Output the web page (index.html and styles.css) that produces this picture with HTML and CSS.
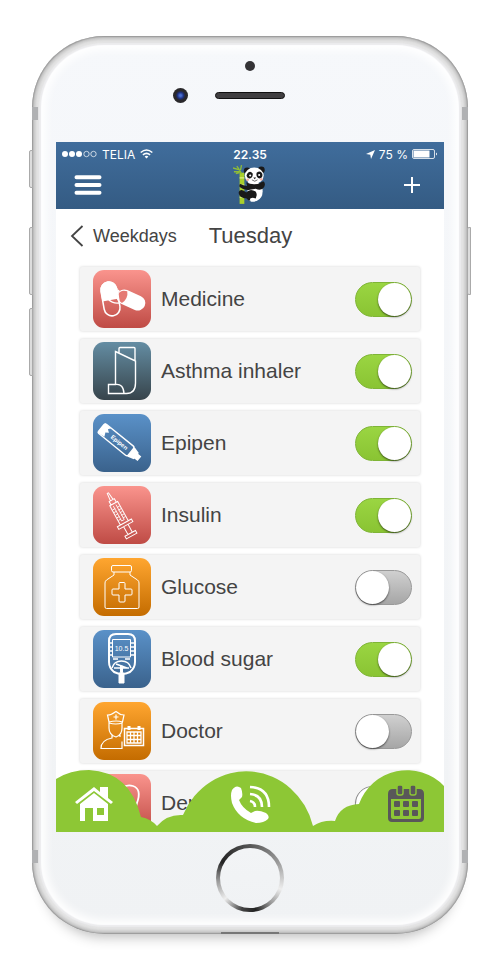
FILE: index.html
```html
<!DOCTYPE html>
<html lang="en">
<head>
    <meta charset="UTF-8">
    <meta name="viewport" content="width=device-width, initial-scale=1">
    <title>Tuesday</title>
    <link rel="stylesheet" href="styles.css">
</head>
<body>
    <div class="phone">
        <span class="side-button mute"></span>
        <span class="side-button volume-up"></span>
        <span class="side-button volume-down"></span>
        <span class="side-button power"></span>
        <span class="antenna antenna-top"></span>
        <span class="antenna antenna-bottom"></span>

        <div class="bezel-top">
            <span class="sensor"></span>
            <div class="speaker-row">
                <span class="camera"></span>
                <span class="speaker"></span>
            </div>
        </div>

        <div class="screen">
            <header class="header">
                <div class="status-bar">
                    <div class="carrier">
                        <svg width="35" height="8" viewBox="0 0 35 8" fill="#fff" stroke="#fff">
                            <g stroke="none"><circle cx="3" cy="4" r="3"/><circle cx="10" cy="4" r="3"/><circle cx="17" cy="4" r="3"/></g>
                            <g fill="none" stroke-width=".7"><circle cx="24.500" cy="4" r="2.700"/><circle cx="31.500" cy="4" r="2.700"/></g>
                        </svg>
                        <span>TELIA</span>
                        <svg width="13" height="10" viewBox="0 0 13 10" fill="none" stroke="#fff" stroke-width="1.600">
                            <path d="M.7 3.500q5.800-5 11.600 0M2.900 5.800q3.600-3 7.200 0"/><path d="M4.600 7.600q1.900-1.500 3.800 0L6.500 9.600z" fill="#fff" stroke="none"/>
                        </svg>
                    </div>
                    <strong class="time">22.35</strong>
                    <div class="battery">
                        <svg width="9" height="9" viewBox="0 0 9 9" fill="#fff"><path d="M9 0L5 9 4.300 4.700 0 4z"/></svg>
                        <span>75 %</span>
                        <svg width="26" height="10" viewBox="0 0 26 10" fill="none" stroke="#fff">
                            <rect x=".5" y=".5" width="22" height="9" rx="1.500" stroke-width=".8"/>
                            <path d="M1.500 1.500h16v7h-16z" fill="#fff" stroke="none"/><path d="M24 3.500q2 1.500 0 3z" fill="#fff" stroke="none"/>
                        </svg>
                    </div>
                </div>
                <div class="toolbar">
                    <button type="button" class="menu-button" aria-label="Menu">
                        <svg width="28" height="20" viewBox="0 0 28 20" stroke="#fff" stroke-width="4" stroke-linecap="round"><path d="M2.500 2.200h23M2.500 10h23M2.500 17.800h23"/></svg>
                    </button>
                    <svg class="logo" width="34" height="40" viewBox="0 0 36 42">
                        <path d="M7 8h5v33H7z" fill="#a9cf2c"/>
                        <path d="M7 13.500h5M7 21h5M7 34h5" stroke="#dff08a" stroke-width="1.200"/>
                        <path d="M9 9Q6 3 4 1M7 5L0 3M8 7L1 7M8 5L9 0M7 8L3 9" stroke="#8fbd36" stroke-width="1.400" fill="none"/>
                        <path d="M16 18q12-4 15 6 2 10-6 14-7 2-10-3z" fill="#fff"/>
                        <path d="M14 18q9 5 18-1 3 2 1 6-3 5-9 2l-6 1q-6 1-11-3-1-3 1-3 4 2 7 2z" fill="#191919"/>
                        <path d="M7 27q3-2 7 2 4-5 10-1 3 5-2 9-5 2-8-2-5 0-7-3-2-3 0-5z" fill="#191919"/>
                        <circle cx="15" cy="6" r="3.600" fill="#191919"/><circle cx="30" cy="5" r="3.600" fill="#191919"/>
                        <ellipse cx="22.500" cy="11" rx="10" ry="8.500" fill="#fff"/>
                        <path d="M15 9q3-4 6 0 0 5-4 5-4-1-2-5zM25 8q4-3 6 1 1 5-3 5-4-1-3-6z" fill="#191919"/>
                        <circle cx="18.200" cy="11" r="1.100" fill="#fff"/><circle cx="27.700" cy="10.500" r="1.100" fill="#fff"/>
                        <path d="M21.500 13h3l-1.500 2z" fill="#191919"/><path d="M20 15.500q3 3 6 0" fill="none" stroke="#444" stroke-width=".8"/>
                        <circle cx="15.500" cy="15.500" r="1.500" fill="#f3b4a8"/><circle cx="30" cy="15" r="1.500" fill="#f3b4a8"/>
                        <ellipse cx="21" cy="36.500" rx="3" ry="2" fill="#fff"/>
                    </svg>
                    <button type="button" class="add-button" aria-label="Add">
                        <svg width="16" height="16" viewBox="0 0 16 16" stroke="#fff" stroke-width="2"><path d="M0 8h16M8 0v16"/></svg>
                    </button>
                </div>
            </header>

            <div class="title-bar">
                <a href="#" class="back">
                    <svg width="14" height="22" viewBox="0 0 14 22" fill="none" stroke="#444" stroke-width="1.800"><path d="M12.500 1L2 11l10.500 10"/></svg>
                    Weekdays
                </a>
                <h1>Tuesday</h1>
            </div>

            <main class="list">
                <label class="row">
                    <span class="icon red">
                        <svg viewBox="0 0 58 58">
                            <g transform="translate(38 30) rotate(24)"><rect x="-15" y="-7.500" width="30" height="15" rx="7.500" fill="#fff"/><path d="M-7-6.500q4 6 0 13-7-1-7-6.500t7-6.500z" fill="#e57973"/></g>
                            <g transform="translate(17.500 29) rotate(-10)"><rect x="-8" y="-17" width="16" height="34" rx="8" fill="none" stroke="#fff" stroke-width="1.500"/><path d="M-8.500 1V-9.500a8.500 8.500 0 0 1 17 0V1z" fill="#fff"/></g>
                            <path d="M15 29q5 5 11 4M26 20q-3 4-1 9" fill="none" stroke="#fff" stroke-width="1.300"/>
                        </svg>
                    </span>
                    <span class="name">Medicine</span>
                    <input type="checkbox" class="switch" checked>
                </label>
                <label class="row">
                    <span class="icon slate">
                        <svg viewBox="0 0 58 58" fill="none" stroke="#fff" stroke-width="1.400">
                            <path d="M26 11V6.500q0-1 1-1h14q1 0 1 1V19M22.500 9.500l20 9.500v22q0 10.500-9 10.500h-18v-9h7zM22.500 42.500q8-1 8.500 9"/>
                        </svg>
                    </span>
                    <span class="name">Asthma inhaler</span>
                    <input type="checkbox" class="switch" checked>
                </label>
                <label class="row">
                    <span class="icon blue">
                        <svg viewBox="0 0 58 58">
                            <g transform="translate(27 29) rotate(39)">
                                <rect x="-24" y="-6" width="38" height="12" rx="2" fill="none" stroke="#fff" stroke-width="1.400"/>
                                <path d="M-24-6h8l-2 3 3 2-3 2 2 4-8 1zM14-6l7 2v8l-7 2zM20-3h5v6h-5z" fill="#fff"/>
                                <text class="pen-text" x="-11" y="2">Epipen</text>
                            </g>
                        </svg>
                    </span>
                    <span class="name">Epipen</span>
                    <input type="checkbox" class="switch" checked>
                </label>
                <label class="row">
                    <span class="icon red">
                        <svg viewBox="0 0 58 58" fill="none" stroke="#fff" stroke-width="1">
                            <g transform="translate(27 29) rotate(-29)">
                                <path d="M-.7-25h1.400l.8 8h-3zM-3-13v-4h6v4M-4.500-13h9V9h-9zM-8 9H8v3H-8zM-2.500 12v9M2.500 12v9M-6 21H6v3H-6z"/>
                                <path d="M-1.500-11v17h3v-17M-4-8h3M-4-5h3M-4-2h3M-4 1h3M-4 4h3M1-8h3M1-5h3M1-2h3M1 1h3M1 4h3" stroke-width=".8"/>
                            </g>
                        </svg>
                    </span>
                    <span class="name">Insulin</span>
                    <input type="checkbox" class="switch" checked>
                </label>
                <label class="row">
                    <span class="icon orange">
                        <svg viewBox="0 0 58 58" fill="none" stroke="#fff" stroke-width="1">
                            <rect x="18.500" y="7.500" width="20" height="6.500" rx="1.500"/>
                            <path d="M21 14v3l-7.500 5q-1.500 1-1.500 3v24q0 1.500 1.500 1.500h31q1.500 0 1.500-1.500V25q0-2-1.500-3L37 17v-3M26 25.500q0-1 1-1h4q1 0 1 1V31h6q1 0 1 1v4q0 1-1 1h-6v6q0 1-1 1h-4q-1 0-1-1v-6h-6q-1 0-1-1v-4q0-1 1-1h6z"/>
                        </svg>
                    </span>
                    <span class="name">Glucose</span>
                    <input type="checkbox" class="switch">
                </label>
                <label class="row">
                    <span class="icon blue">
                        <svg viewBox="0 0 58 58" fill="none" stroke="#fff">
                            <path d="M16 11q0-7 7-7h12q7 0 7 7v21q0 6-5 10-8 4-16 0-5-4-5-10z" stroke-width="2"/>
                            <path d="M19.500 9.500h18V27h-18z" stroke-width="1"/>
                            <path d="M15 13h4M15 17h4M15 21h4M15 25h4M38 13h4M38 17h4M38 21h4M38 25h4M20 29h5M32 29h5" stroke-width="1.500"/>
                            <path d="M19 38q2-7 9.500-7t9.500 7M21 38h6M30 38h6M23 34l11 4" stroke-width="1.500"/>
                            <path d="M27.500 36h2v6l1.500 2v9h-5v-9l1.500-2z" fill="#fff"/>
                            <text class="meter-text" x="28.500" y="21">10.5</text>
                        </svg>
                    </span>
                    <span class="name">Blood sugar</span>
                    <input type="checkbox" class="switch" checked>
                </label>
                <label class="row">
                    <span class="icon orange">
                        <svg viewBox="0 0 58 58" fill="none" stroke="#fff" stroke-width="1.200">
                            <path d="M16 20l-1.500-7q4 0 8.500-3.500 4 3.500 8 3.500l-1.500 7q-6-2-13.500 0zM20.500 15h5M23 12.500v5M16 20v6q0 7 7 9 6-2 6-9v-6M16 21q7 2 13 0M19 33v3q-11 2-11 10.500h21v-7M27 33v2"/>
                            <path d="M31.500 26.500h19v17h-19z" stroke-width="1.500"/><path d="M34 30h14v11H34zM34 33.500h14M34 37.500h14M37.500 30v11M41 30v11M44.500 30v11" stroke-width="1.300"/>
                            <path d="M36 24v4M46 24v4" stroke-width="3"/>
                        </svg>
                    </span>
                    <span class="name">Doctor</span>
                    <input type="checkbox" class="switch">
                </label>
                <label class="row">
                    <span class="icon red">
                        <svg viewBox="0 0 58 58" fill="none" stroke="#fff" stroke-width="1.800"><path d="M29 14q-5-4-10-2-9 3-5 17l5 18q2 4 4-1l3-11q3-4 6 0l3 11q2 5 4 1l5-18q5-14-4-17-6-2-11 2z"/></svg>
                    </span>
                    <span class="name">Dentist</span>
                    <input type="checkbox" class="switch">
                </label>
            </main>

            <nav class="bottom-nav">
                <svg class="clouds" viewBox="0 0 388 62" preserveAspectRatio="none">
                    <path fill="#8dc735" d="M0 9Q14 0 33 0 74 2 85 47 95 49 101 56 111 44 127 45A69 73 0 0 1 257 56Q266 50 279 51 284 35 303 34A51 51 0 0 1 388 16V62H0z"/>
                </svg>
                <a href="#" aria-label="Home">
                    <svg width="38" height="36" viewBox="0 0 38 36" fill="#fff"><path d="M0 16L19 1l6 5V1h8v11l5 4-2 2L19 5 2 18zM5 18L19 7l14 11v17H18V22h-8v13H5z"/><path d="M22 22h7v7h-7z" fill="#8dc735"/></svg>
                </a>
                <a href="#" aria-label="Call">
                    <svg width="40" height="40" viewBox="0 0 40 40" fill="none" stroke="#fff" stroke-width="2.600">
                        <path d="M1 6q4-6 9-2 2 5 1 9l-3 3q3 8 12 13l4-2q4-1 11 2 4 3 2 6-4 4-12 4Q7 35 1 19-1 11 1 6z" fill="#fff" stroke="none"/>
                        <path d="M19 17q5 1 5 6M19 10q12 1 12 13M19 3q19 1 19 20"/>
                    </svg>
                </a>
                <a href="#" aria-label="Calendar">
                    <svg width="36" height="38" viewBox="0 0 36 38" fill="#595759">
                        <path fill-rule="evenodd" d="M5 4h26q5 0 5 5v24q0 4-4 4H4q-4 0-4-4V9q0-5 5-5zM3 14v18q0 2 2 2h26q2 0 2-2V14z"/>
                        <rect x="9" y="0" width="6" height="10" rx="2" stroke="#8dc735" stroke-width="1.400"/><rect x="22" y="0" width="6" height="10" rx="2" stroke="#8dc735" stroke-width="1.400"/>
                        <rect x="6" y="16" width="6" height="6" rx="1"/><rect x="15" y="16" width="6" height="6" rx="1"/><rect x="24" y="16" width="6" height="6" rx="1"/>
                        <rect x="6" y="25" width="6" height="6" rx="1"/><rect x="15" y="25" width="6" height="6" rx="1"/><rect x="24" y="25" width="6" height="6" rx="1"/>
                    </svg>
                </a>
            </nav>
        </div>

        <button type="button" class="home-button" aria-label="Home button"></button>
        <span class="port"></span>
    </div>
</body>
</html>
```
FILE: styles.css
```css
* {
    box-sizing: border-box;
}

body {
    display: flex;
    justify-content: center;
    height: 100vh;
    margin: 0;
    padding: 36px 32px 43px;
    background-color: #fff;
    font-family: "Liberation Sans", Arial, sans-serif;
    color: #444;
}

button {
    padding: 0;
    border: none;
    background: none;
    cursor: pointer;
}

svg {
    display: block;
}

/* phone body */
.phone {
    position: relative;
    display: flex;
    flex-direction: column;
    width: 100%;
    max-width: 436px;
    padding: 0 24px 22px;
    border-radius: 72px;
    background: linear-gradient(#f6f8fb, #f0f2f4);
    box-shadow:
        inset 0 0 2px 1px #8e8e8e,
        inset 0 0 2px 4px #cfcfcf,
        inset 0 0 1px 7px #e3e3e3,
        inset 0 0 1px 9px #ececee,
        inset 0 0 8px 14px #fff,
        0 14px 14px -12px rgba(0, 0, 0, 0.3);
}

.side-button {
    position: absolute;
    left: -3px;
    width: 4px;
    height: 68px;
    border: 1px solid #aaa;
    border-radius: 2px 0 0 2px;
    background-color: #ddd;
}

.mute {
    top: 114px;
    height: 38px;
}

.volume-up {
    top: 191px;
}

.volume-down {
    top: 272px;
}

.power {
    top: 191px;
    right: -3px;
    left: auto;
}

.antenna {
    position: absolute;
    right: 0;
    left: 0;
    height: 13px;
    border: solid #b0b1b3;
    border-width: 0 6px;
}

.antenna-top {
    top: 71px;
}

.antenna-bottom {
    bottom: 71px;
}

.bezel-top {
    display: flex;
    flex-direction: column;
    flex-shrink: 0;
    align-items: center;
    gap: 17px;
    height: 106px;
    padding-top: 25px;
}

.sensor {
    width: 10px;
    height: 10px;
    border-radius: 50%;
    background-color: #343336;
}

.speaker-row {
    display: grid;
    grid-template-columns: 1fr 70px 1fr;
    align-items: center;
    gap: 27px;
    width: 100%;
}

.camera {
    justify-self: end;
    width: 15px;
    height: 15px;
    border-radius: 50%;
    background: radial-gradient(#4a6fd0 8%, #1d2f7d 30%, #29282b 45%);
}

.speaker {
    height: 7px;
    border: 1px solid #111;
    border-radius: 4px;
    background-color: #403f41;
}

.screen {
    position: relative;
    display: flex;
    flex: 1;
    flex-direction: column;
    min-height: 0;
    overflow: hidden;
    background-color: #fff;
}

/* header */
.header {
    flex-shrink: 0;
    height: 67px;
    padding: 4px 6px 0;
    background: linear-gradient(#406d9c, #345b83);
    color: #fff;
}

.status-bar,
.toolbar {
    display: grid;
    grid-template-columns: 1fr auto 1fr;
    align-items: center;
}

.status-bar {
    height: 16px;
    font-family: Inter, "Liberation Sans", sans-serif;
    font-size: 12px;
}

.carrier,
.battery {
    display: flex;
    align-items: center;
    gap: 5px;
}

.battery {
    justify-content: flex-end;
    gap: 4px;
}

.time {
    font-weight: 600;
}

.toolbar {
    height: 46px;
    padding: 0 12px;
}

.menu-button {
    justify-self: start;
}

.add-button {
    justify-self: end;
    padding: 6px;
}

.title-bar {
    display: flex;
    flex-shrink: 0;
    align-items: center;
    gap: 32px;
    height: 54px;
    padding: 0 14px;
}

.back {
    display: flex;
    align-items: center;
    gap: 9px;
    color: #444;
    font-size: 18px;
    text-decoration: none;
}

h1 {
    margin: 0;
    font-size: 22px;
    font-weight: normal;
}

/* list */
.list {
    display: flex;
    flex: 1;
    flex-direction: column;
    gap: 8px;
    min-height: 0;
    padding: 4px 24px 0;
    overflow-y: auto;
    scrollbar-width: none;
}

.row {
    display: flex;
    flex-shrink: 0;
    align-items: center;
    gap: 10px;
    padding: 3px 8px 3px 13px;
    border-radius: 2px;
    background-color: #f4f4f4;
    box-shadow: 0 0 3px rgba(0, 0, 0, 0.18);
    cursor: pointer;
}

.icon {
    width: 58px;
    height: 58px;
    border-radius: 11px;
}

.red {
    background: linear-gradient(#fa948d, #bf4b45);
}

.slate {
    background: linear-gradient(#648da3, #37444b);
}

.blue {
    background: linear-gradient(#5a91c8, #3a628c);
}

.orange {
    background: linear-gradient(#ffa630, #c46c00);
}

.pen-text {
    fill: #fff;
    font-size: 6px;
    font-weight: bold;
}

.meter-text {
    fill: #fff;
    stroke: none;
    font-size: 7px;
    text-anchor: middle;
}

.name {
    flex: 1;
    font-size: 21px;
}

.switch {
    appearance: none;
    display: flex;
    width: 57px;
    height: 35px;
    margin: 0;
    padding: 0;
    border: 1px solid #999;
    border-radius: 18px;
    background: linear-gradient(#d0d0d0, #a6a6a6);
    cursor: pointer;
}

.switch::before {
    content: "";
    width: 33px;
    height: 33px;
    border-radius: 50%;
    background-color: #fff;
    box-shadow: 0 1px 2px rgba(0, 0, 0, 0.6);
}

.switch:checked {
    justify-content: flex-end;
    border-color: #7fb536;
    background: linear-gradient(#9ad542, #8ac433);
}

/* bottom navigation, drawn over the end of the list */
.bottom-nav {
    position: absolute;
    right: 0;
    bottom: 0;
    left: 0;
    display: flex;
    align-items: center;
    justify-content: space-between;
    height: 62px;
    padding: 6px 20px 0 19px;
}

.bottom-nav a {
    position: relative;
}

.clouds {
    position: absolute;
    top: 0;
    left: 0;
    width: 100%;
    height: 100%;
}

.home-button {
    flex-shrink: 0;
    align-self: center;
    width: 68px;
    height: 68px;
    margin-top: 12px;
    border: 4px solid transparent;
    border-radius: 50%;
    background:
        linear-gradient(#f2f4f6, #f0f2f4) padding-box,
        conic-gradient(#555, #999 60deg, #eee 110deg, #999 140deg, #222 170deg, #444 195deg, #eee 230deg, #999 265deg, #222 300deg, #555) border-box;
}

.port {
    position: absolute;
    bottom: 0;
    left: 50%;
    width: 58px;
    height: 2px;
    margin-left: -29px;
    background-color: #777;
}
```
